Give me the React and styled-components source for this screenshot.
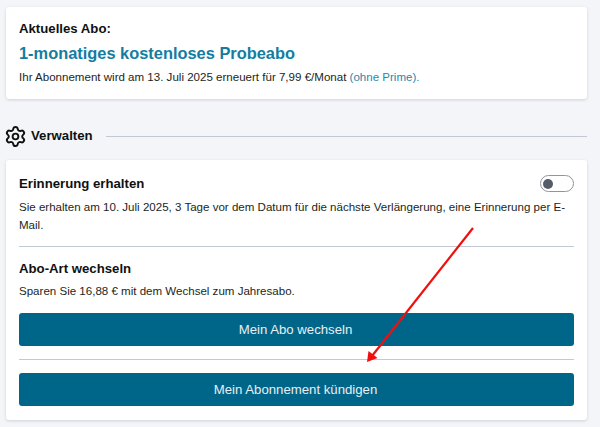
import styled, { createGlobalStyle } from "styled-components";
import { Settings } from "lucide-react";

const GlobalStyle = createGlobalStyle`
    html, body {
        margin: 0;
        padding: 0;
        background: #f4f5f8;
        font-family: "Liberation Sans", Arial, sans-serif;
    }
`;

const Page = styled.main`
    position: relative;
    width: 600px;
    height: 427px;
    overflow: hidden;
    box-sizing: border-box;
    padding: 7px 13px 0 6px;
    display: flex;
    flex-direction: column;
`;

const Card = styled.section`
    background: #fff;
    border-radius: 3px;
    box-shadow: 0 1px 3px rgba(60, 70, 90, 0.2);
    padding: ${(props) => props.$padding};
    display: flex;
    flex-direction: column;
`;

const SectionHeader = styled.div`
    display: flex;
    align-items: center;
    height: 24px;
    margin: 25px 0 12px -2px;
    color: #111;
`;

const SectionTitle = styled.h2`
    margin: 0 0 0 4px;
    font-size: 13.2px;
    line-height: 24px;
    font-weight: 700;
    color: #0f1111;
`;

const SectionLine = styled.div`
    flex: 1;
    height: 1px;
    margin-left: 13px;
    background: #c3c9d3;
`;

const Label = styled.h3`
    margin: 0;
    font-size: 13.2px;
    line-height: 18px;
    font-weight: 700;
    color: #0f1111;
`;

const PlanName = styled.div`
    margin-top: 4px;
    font-size: 16.4px;
    line-height: 22px;
    font-weight: 700;
    color: #147d9f;
`;

const Text = styled.p`
    margin: ${(props) => props.$margin || "0"};
    font-size: 11.55px;
    line-height: 18px;
    color: #1c1f22;
`;

const PrimeLink = styled.a`
    color: #2a87ad;
`;

const Row = styled.div`
    display: flex;
    justify-content: space-between;
    align-items: flex-start;
`;

const Toggle = styled.div`
    box-sizing: border-box;
    width: 34px;
    height: 17px;
    border: 1px solid #8f959e;
    border-radius: 9px;
    background: #fff;
    padding: 2px;
    display: flex;
    align-items: center;
`;

const ToggleKnob = styled.div`
    width: 10px;
    height: 10px;
    border-radius: 50%;
    background: #565c68;
`;

const Divider = styled.hr`
    width: 100%;
    height: 1px;
    margin: ${(props) => props.$margin};
    border: 0;
    background: #c3c9d3;
`;

const ActionButton = styled.button`
    width: 100%;
    height: 33px;
    margin-top: ${(props) => props.$top || "0"};
    padding: 0 14px 0 12px;
    border: 0;
    border-radius: 3px;
    background: #006689;
    color: #e8eef2;
    font-family: inherit;
    font-size: 13.2px;
    cursor: pointer;
`;

const Arrow = styled.svg`
    position: absolute;
    left: 0;
    top: 0;
    pointer-events: none;
`;

export default function App() {
    return (
        <Page>
            <GlobalStyle />
            <Card $padding="13px 13px 13px">
                <Label>Aktuelles Abo:</Label>
                <PlanName>1-monatiges kostenloses Probeabo</PlanName>
                <Text $margin="4px 0 0">
                    Ihr Abonnement wird am 13. Juli 2025 erneuert für 7,99 €/Monat{" "}
                    <PrimeLink>(ohne Prime).</PrimeLink>
                </Text>
            </Card>

            <SectionHeader>
                <Settings size={23} strokeWidth={2} />
                <SectionTitle>Verwalten</SectionTitle>
                <SectionLine />
            </SectionHeader>

            <Card $padding="15px 13px 14px">
                <Row>
                    <Label>Erinnerung erhalten</Label>
                    <Toggle>
                        <ToggleKnob />
                    </Toggle>
                </Row>
                <Text $margin="5px 0 0">
                    Sie erhalten am 10. Juli 2025, 3 Tage vor dem Datum für die nächste Verlängerung, eine Erinnerung per E-Mail.
                </Text>
                <Divider $margin="12px 0 13px" />
                <Label>Abo-Art wechseln</Label>
                <Text $margin="4px 0 0">Sparen Sie 16,88 € mit dem Wechsel zum Jahresabo.</Text>
                <ActionButton $top="13px">Mein Abo wechseln</ActionButton>
                <Divider $margin="13px 0" />
                <ActionButton>Mein Abonnement kündigen</ActionButton>
            </Card>

            {/* roter Pfeil liegt über dem Inhalt */}
            <Arrow width="600" height="427" viewBox="0 0 600 427">
                <line x1="473" y1="228" x2="372" y2="356" stroke="#f00f0f" strokeWidth="2.2" />
                <polygon points="367,362 368.5,351 377.5,358" fill="#f00f0f" />
            </Arrow>
        </Page>
    );
}
